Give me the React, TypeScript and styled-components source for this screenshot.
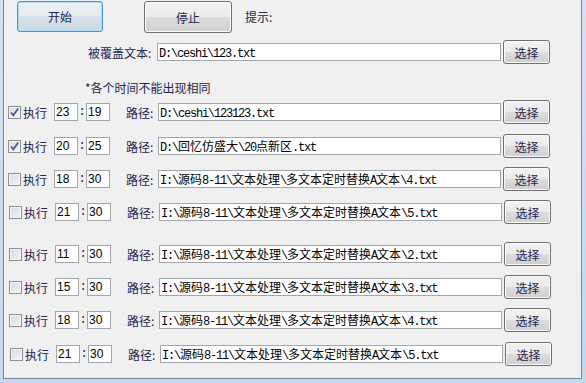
import styled, { createGlobalStyle } from "styled-components";

interface TaskRow {
  on: boolean;
  hour: string;
  minute: string;
  path: string;
  top: number;
  shift: number;
}

const SRC = "I:\\源码8-11\\文本处理\\多文本定时替换A文本\\";

const rows: TaskRow[] = [
  { on: true, hour: "23", minute: "19", path: "D:\\ceshi\\123123.txt", top: 4, shift: 0 },
  { on: true, hour: "20", minute: "25", path: "D:\\回忆仿盛大\\20点新区.txt", top: 10, shift: 0 },
  { on: false, hour: "18", minute: "30", path: SRC + "4.txt", top: 9, shift: 0 },
  { on: false, hour: "21", minute: "30", path: SRC + "5.txt", top: 9, shift: 1 },
  { on: false, hour: "11", minute: "30", path: SRC + "2.txt", top: 18, shift: 1 },
  { on: false, hour: "15", minute: "30", path: SRC + "3.txt", top: 9, shift: 1 },
  { on: false, hour: "18", minute: "30", path: SRC + "4.txt", top: 9, shift: 1 },
  { on: false, hour: "21", minute: "30", path: SRC + "5.txt", top: 10, shift: 2 },
];

// SimSun draws latin at half width, so split runs and size them apart
const MixedText = ({ text }: { text: string }) => (
  <>
    {(text.match(/[\x00-\x7f]+|[^\x00-\x7f]+/g) || []).map((part, i) =>
      /^[\x00-\x7f]/.test(part) ? <Ascii key={i}>{part}</Ascii> : <Cjk key={i}>{part}</Cjk>
    )}
  </>
);

const CheckMark = () => (
  <svg width="11" height="11" viewBox="0 0 11 11">
    <path d="M2 5.5 L4.3 8.3 L9.2 1.5" fill="none" stroke="#4a5a9a" strokeWidth="1.8" />
  </svg>
);

const App = () => {
  return (
    <Frame>
      <GlobalStyle />
      <Client>
        <Header>
          <PushButton $w={86} $h={31} $focused style={{ marginLeft: 13 }}>
            开始
          </PushButton>
          <PushButton $w={88} $h={32} style={{ marginLeft: 41 }}>
            停止
          </PushButton>
          <HintLabel>提示:</HintLabel>
        </Header>

        <TargetRow>
          <TargetLabel>被覆盖文本:</TargetLabel>
          <PathBox $w={344}>
            <MixedText text="D:\ceshi\123.txt" />
          </PathBox>
          <SelectButton>选择</SelectButton>
        </TargetRow>

        <Note>*各个时间不能出现相同</Note>

        {rows.map((r, i) => (
          <Row key={i} $top={r.top} $shift={r.shift}>
            <Check>
              <CheckBox>{r.on && <CheckMark />}</CheckBox>
              <CheckText>执行</CheckText>
            </Check>
            <TimeBox style={{ marginLeft: 7 }}>{r.hour}</TimeBox>
            <Colon>:</Colon>
            <TimeBox>{r.minute}</TimeBox>
            <PathLabel>路径:</PathLabel>
            <PathBox $w={343}>
              <MixedText text={r.path} />
            </PathBox>
            <SelectButton>选择</SelectButton>
          </Row>
        ))}
      </Client>
    </Frame>
  );
};

export default App;

// style
const GlobalStyle = createGlobalStyle`
  body {
    margin: 0;
    overflow: hidden;
    font-family: "Noto Sans CJK SC", "Liberation Sans", sans-serif;
  }
`;
const Frame = styled.div`
  width: 586px;
  height: 383px;
  box-sizing: border-box;
  padding: 0 4px 4px 3px;
  background: linear-gradient(180deg, #d3e1f1, #c6d8ec);
`;
const Client = styled.div`
  height: 100%;
  box-sizing: border-box;
  background: #f0f0f0;
  border: 1px solid #7b8594;
  border-top: none;
  display: flex;
  flex-direction: column;
  color: #262650;
  font-size: 12px;
`;
const Header = styled.div`
  display: flex;
  align-items: center;
  padding-top: 1px;
  height: 32px;
  box-sizing: content-box;
`;
const PushButton = styled.div<{ $w: number; $h: number; $focused?: boolean }>`
  width: ${(p) => p.$w}px;
  height: ${(p) => p.$h}px;
  box-sizing: border-box;
  align-self: flex-start;
  display: flex;
  align-items: center;
  justify-content: center;
  font-size: 12px;
  border-radius: 3px;
  border: 1px solid ${(p) => (p.$focused ? "#3d9ad8" : "#707070")};
  box-shadow: inset 0 0 0 1px ${(p) => (p.$focused ? "#a6daf6" : "#fbfbfb")};
  background: ${(p) =>
    p.$focused
      ? "linear-gradient(#eef2f5 0%, #e5ebef 49%, #d6e2e9 50%, #cbdae3 100%)"
      : "linear-gradient(#f2f2f2 0%, #ebebeb 49%, #dddddd 50%, #cfcfcf 100%)"};
`;
const HintLabel = styled.span`
  margin-left: 13px;
  margin-top: -1px;
`;
const TargetRow = styled.div`
  display: flex;
  align-items: center;
  height: 24px;
  margin-top: 7px;
  padding-left: 84px;
`;
const TargetLabel = styled.span`
  width: 69px;
  white-space: nowrap;
`;
const Note = styled.div`
  margin-top: 16px;
  margin-left: 81px;
  line-height: 16px;
`;
const Row = styled.div<{ $top: number; $shift: number }>`
  display: flex;
  align-items: center;
  height: 24px;
  margin-top: ${(p) => p.$top}px;
  padding-left: ${(p) => 4 + p.$shift}px;
`;
const Check = styled.div`
  display: flex;
  align-items: center;
  width: 39px;
`;
const CheckBox = styled.div`
  width: 13px;
  height: 13px;
  box-sizing: border-box;
  border: 1px solid #8e8f8f;
  background: linear-gradient(135deg, #d5dbe2, #f4f5f7);
  box-shadow: inset 0 0 0 1px #f4f6f8;
  display: flex;
  align-items: center;
  justify-content: center;
`;
const CheckText = styled.span`
  margin-left: 2px;
`;
const TimeBox = styled.div`
  width: 24px;
  height: 18px;
  box-sizing: border-box;
  border: 1px solid #a3a7ad;
  background: #fff;
  color: #000;
  font-family: "Liberation Sans", sans-serif;
  font-size: 12px;
  line-height: 16px;
  padding-left: 1px;
`;
const Colon = styled.span`
  width: 8px;
  text-align: center;
  font-family: "Liberation Mono", monospace;
`;
const PathLabel = styled.span`
  margin-left: 16px;
  width: 32px;
  white-space: nowrap;
`;
const PathBox = styled.div<{ $w: number }>`
  width: ${(p) => p.$w}px;
  height: 18px;
  box-sizing: border-box;
  border: 1px solid #a3a7ad;
  background: #fff;
  color: #000;
  padding-left: 1px;
  line-height: 16px;
  white-space: nowrap;
  overflow: hidden;
`;
const Ascii = styled.span`
  font-family: "Liberation Mono", monospace;
  font-size: 12px;
  letter-spacing: -1.2px;
`;
const Cjk = styled.span`
  font-family: "Noto Sans CJK SC", sans-serif;
  font-size: 12px;
`;
const SelectButton = styled.div`
  margin-left: 2px;
  width: 47px;
  height: 24px;
  box-sizing: border-box;
  display: flex;
  align-items: center;
  justify-content: center;
  border: 1px solid #707070;
  border-radius: 3px;
  box-shadow: inset 0 0 0 1px #fbfbfb;
  background: linear-gradient(#f2f2f2 0%, #ebebeb 49%, #dddddd 50%, #cfcfcf 100%);
  font-size: 12px;
`;
